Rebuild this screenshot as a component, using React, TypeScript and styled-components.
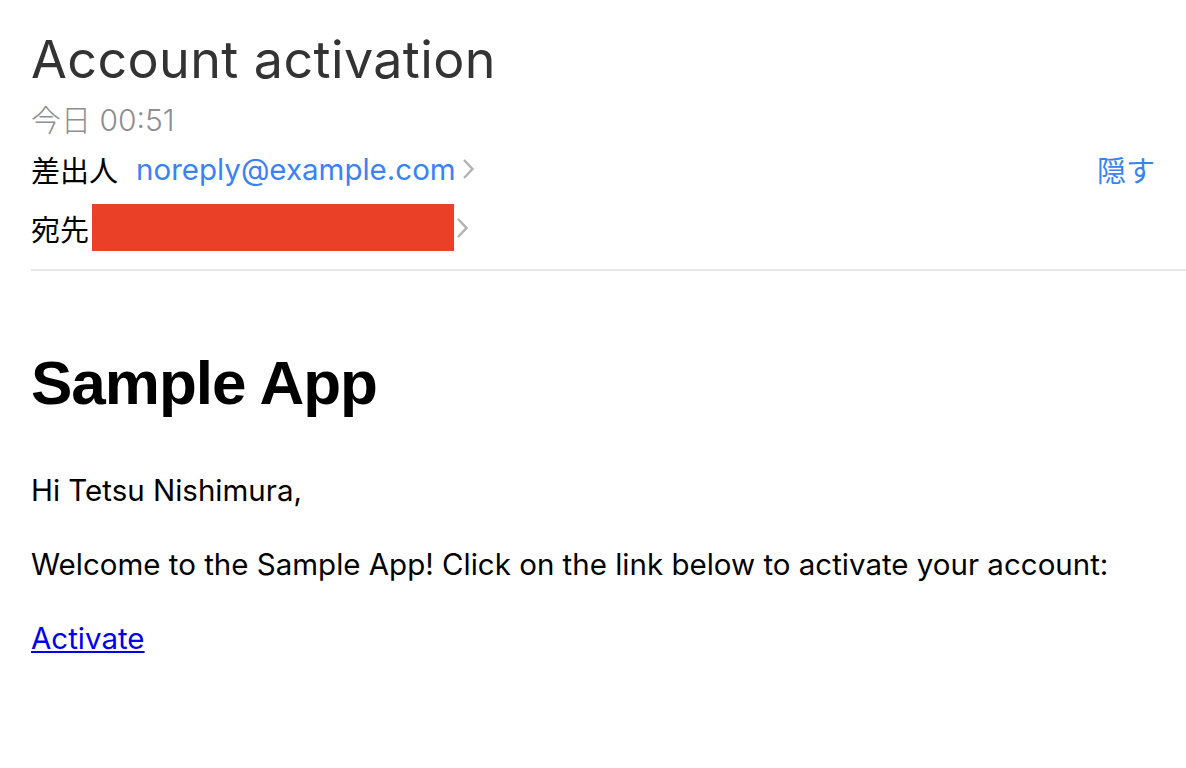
import React from "react";
import styled, { createGlobalStyle } from "styled-components";

const Global = createGlobalStyle`
  html, body { margin: 0; padding: 0; background: #ffffff; }
  body { font-family: Inter, "Noto Sans CJK JP", sans-serif; -webkit-font-smoothing: antialiased; }
`;

const Page = styled.div`
  width: 1186px;
  height: 768px;
  overflow: hidden;
  background: #fff;
`;

const Header = styled.header`
  padding: 28px 0 0 31px;
  display: flex;
  flex-direction: column;
`;

const Subject = styled.h1`
  margin: 0;
  font-family: Inter, "Noto Sans CJK JP", sans-serif;
  font-weight: 400;
  font-size: 52px;
  line-height: 64px;
  color: #333333;
  letter-spacing: 0.4px;
`;

const DateLine = styled.div`
  margin-top: 8px;
  font-size: 30px;
  line-height: 40px;
  color: #8e8e93;
  font-weight: 300;
`;

const Row = styled.div`
  display: flex;
  align-items: center;
  height: 57px;
  color: #000;
  &:first-of-type {
    margin-top: 5px;
  }
  & + & {
    margin-top: 2px;
  }
`;

const Label = styled.span<{ $gap: number }>`
  margin-right: ${(p) => p.$gap}px;
  font-family: "Noto Sans CJK JP", sans-serif;
  font-size: 29px;
  color: #000;
`;

const Email = styled.span`
  color: #3a82f7;
  font-size: 29.5px;
`;

const Redacted = styled.div`
  width: 362px;
  height: 47px;
  background: #eb4028;
`;

const Chevron = styled.svg<{ $gap: number }>`
  width: 14px;
  height: 24px;
  margin-left: ${(p) => p.$gap}px;
  flex: none;
`;

const Spacer = styled.div`
  flex: 1;
`;

const HideLink = styled.span`
  font-family: "Noto Sans CJK JP", sans-serif;
  color: #3a82f7;
  font-size: 29px;
  margin-right: 31px;
`;

const Divider = styled.hr`
  margin: 13px 0 0 31px;
  border: none;
  height: 2px;
  background: #e6e6e6;
`;

const Body = styled.main`
  padding: 72px 0 0 31px;
`;

const AppTitle = styled.h2`
  margin: 0 0 49px 0;
  font-family: "Liberation Sans", Arial, sans-serif;
  font-weight: 700;
  font-size: 62px;
  line-height: 80px;
  letter-spacing: -1px;
  color: #000;
`;

const Para = styled.p`
  margin: 0 0 38px 0;
  font-size: 29.5px;
  line-height: 36px;
  color: #000;
`;

const ActivateLink = styled.a`
  font-size: 29.5px;
  line-height: 36px;
  color: #0000ee;
  text-decoration: underline;
`;

const ChevronIcon = ({ gap }: { gap: number }) => (
  <Chevron $gap={gap} viewBox="0 0 14 24">
    <path d="M3 3 L11.5 12 L3 21" fill="none" stroke="#b3b3b3" strokeWidth="2.5" />
  </Chevron>
);

export default function App() {
  return (
    <Page>
      <Global />
      <Header>
        <Subject>Account activation</Subject>
        <DateLine>今日 00:51</DateLine>
        <Row>
          <Label $gap={18}>差出人</Label>
          <Email>noreply@example.com</Email>
          <ChevronIcon gap={5} />
          <Spacer />
          <HideLink>隠す</HideLink>
        </Row>
        <Row>
          <Label $gap={3}>宛先</Label>
          <Redacted />
          <ChevronIcon gap={1} />
        </Row>
      </Header>
      <Divider />
      <Body>
        <AppTitle>Sample App</AppTitle>
        <Para>Hi Tetsu Nishimura,</Para>
        <Para>Welcome to the Sample App! Click on the link below to activate your account:</Para>
        <ActivateLink href="#">Activate</ActivateLink>
      </Body>
    </Page>
  );
}
